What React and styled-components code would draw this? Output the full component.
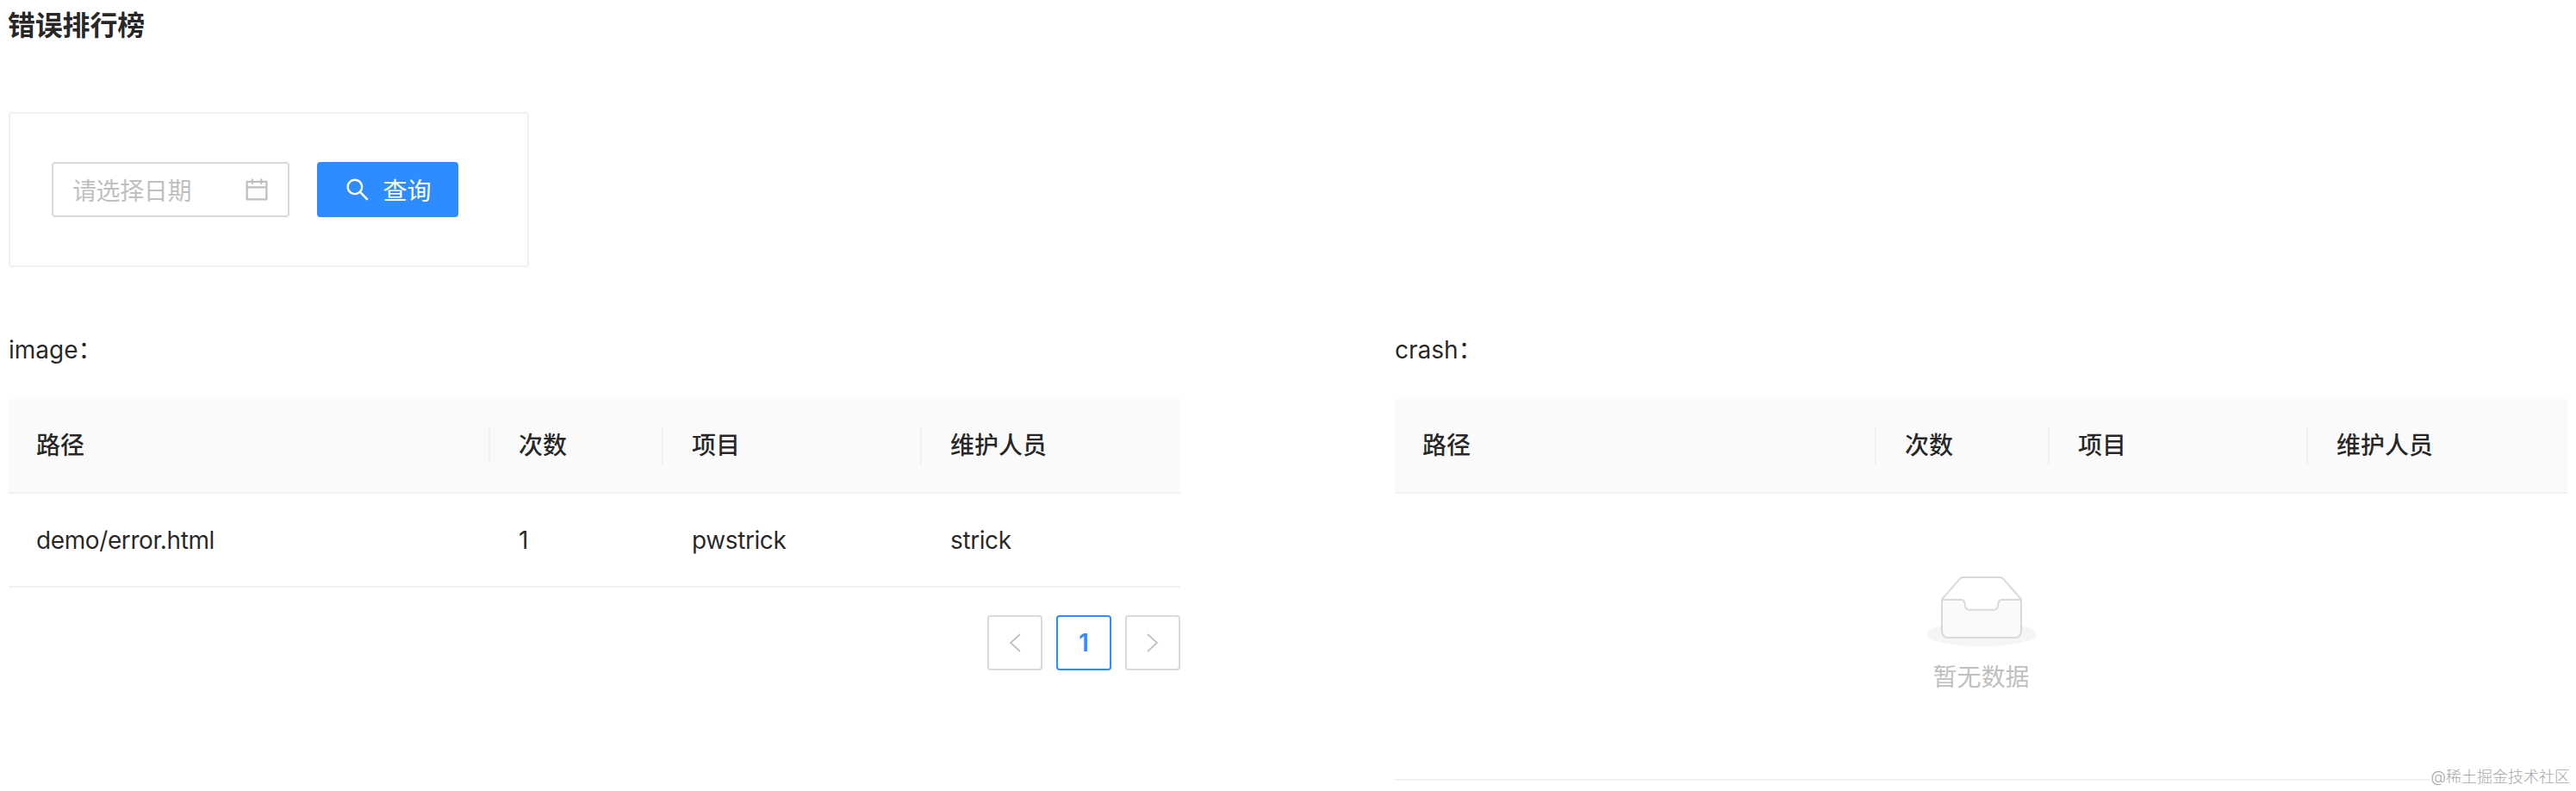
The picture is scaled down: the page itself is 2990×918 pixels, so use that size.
import styled, { createGlobalStyle } from "styled-components";
import { AiOutlineCalendar, AiOutlineSearch } from "react-icons/ai";

const Global = createGlobalStyle`
  html, body {
    margin: 0;
    padding: 0;
    background: #fff;
  }
  * {
    box-sizing: border-box;
  }
`;

const Page = styled.div`
  position: relative;
  width: 2990px;
  height: 918px;
  overflow: hidden;
  padding: 0 10px;
  font-family: Inter, "Noto Sans CJK SC", sans-serif;
  font-size: 28px;
  color: rgba(0, 0, 0, 0.85);
`;

const Title = styled.h3`
  margin: 0 0 0 -1px;
  height: 130px;
  padding-top: 8px;
  font-size: 32px;
  line-height: 44px;
  font-weight: 700;
  letter-spacing: -0.2px;
`;

const SearchCard = styled.div`
  display: flex;
  align-items: center;
  gap: 32px;
  width: 604px;
  height: 180px;
  padding: 0 48px;
  border: 2px solid #f0f0f0;
  border-radius: 4px;
`;

const DateInput = styled.div`
  display: flex;
  align-items: center;
  justify-content: space-between;
  width: 276px;
  height: 64px;
  padding: 0 20px 0 22px;
  border: 2px solid #d9d9d9;
  border-radius: 4px;
  color: #bfbfbf;
  font-size: 28px;
  letter-spacing: -0.4px;
`;

const QueryButton = styled.button`
  display: flex;
  align-items: center;
  justify-content: center;
  gap: 13px;
  width: 164px;
  height: 64px;
  border: none;
  border-radius: 4px;
  background: #2d8cff;
  color: #fff;
  font: inherit;
  box-shadow: 0 4px 0 rgba(0, 0, 0, 0.015);
`;

const Columns = styled.div`
  display: grid;
  grid-template-columns: 1360px 1361px;
  column-gap: 249px;
  margin-top: 73px;
`;

const Section = styled.section`
  min-width: 0;
`;

const Label = styled.div`
  height: 80px;
  line-height: 46px;
`;

const Row = styled.div`
  display: grid;
  grid-template-columns: 560px 201px 300px 1fr;
  align-items: center;
  height: ${(p) => p.$height}px;
  border-bottom: 2px solid #f0f0f0;
  background: ${(p) => (p.$head ? "#fafafa" : "#fff")};
  font-weight: ${(p) => (p.$head ? 500 : 400)};
  letter-spacing: ${(p) => (p.$head ? 0 : "-0.4px")};
`;

const Cell = styled.div`
  position: relative;
  padding-left: 32px;
  line-height: 44px;

  ${(p) =>
    p.$divided &&
    `&::before {
      content: "";
      position: absolute;
      left: -3px;
      top: 0;
      width: 2px;
      height: 44px;
      background: #f0f0f0;
    }`}
`;

const Pager = styled.div`
  display: flex;
  justify-content: flex-end;
  gap: 16px;
  margin-top: 32px;
`;

const PageItem = styled.div`
  display: flex;
  align-items: center;
  justify-content: center;
  width: 64px;
  height: 64px;
  border: 2px solid ${(p) => (p.$active ? "#2d8cff" : "#d9d9d9")};
  border-radius: 4px;
  color: ${(p) => (p.$active ? "#2d8cff" : "#bfbfbf")};
  font-weight: 600;
  font-size: 28px;
`;

const EmptyBody = styled.div`
  display: flex;
  flex-direction: column;
  align-items: center;
  height: 333px;
  padding-top: 95px;
  border-bottom: 2px solid #f0f0f0;
`;

const EmptyText = styled.div`
  margin-top: 14px;
  line-height: 44px;
  color: #bfbfbf;
`;

const Watermark = styled.div`
  position: absolute;
  right: 7px;
  bottom: 6px;
  padding-left: 2px;
  background: #fff;
  font-size: 18px;
  font-weight: 300;
  line-height: 20px;
  color: #a8a8a8;
`;

const EmptyIcon = () => (
  <svg width="128" height="82" viewBox="0 0 64 41">
    <g transform="translate(0 1)" fill="none" fillRule="evenodd">
      <ellipse fill="#F5F5F5" cx="32" cy="33" rx="32" ry="7" />
      <g fillRule="nonzero" stroke="#D9D9D9">
        <path d="M55 12.76L44.854 1.258C44.367.474 43.656 0 42.907 0H21.093c-.749 0-1.46.474-1.947 1.257L9 12.761V22h46v-9.24z" />
        <path
          d="M41.613 15.931c0-1.605.994-2.93 2.227-2.931H55v18.137C55 33.26 53.68 35 52.05 35h-40.1C10.32 35 9 33.259 9 31.137V13h11.16c1.233 0 2.227 1.323 2.227 2.928v.022c0 1.605 1.005 2.901 2.237 2.901h14.752c1.232 0 2.237-1.308 2.237-2.913v-.007z"
          fill="#FAFAFA"
        />
      </g>
    </g>
  </svg>
);

const Chevron = ({ points }) => (
  <svg width="14" height="22" viewBox="0 0 14 22" fill="none" stroke="currentColor" strokeWidth="1.7">
    <polyline points={points} />
  </svg>
);

const headers = ["路径", "次数", "项目", "维护人员"];

const TableHead = () => (
  <Row $head $height={110}>
    {headers.map((h, i) => (
      <Cell key={h} $divided={i > 0}>
        {h}
      </Cell>
    ))}
  </Row>
);

export default function App() {
  return (
    <Page>
      <Global />
      <Title>错误排行榜</Title>
      <SearchCard>
        <DateInput>
          请选择日期
          <AiOutlineCalendar size={32} />
        </DateInput>
        <QueryButton>
          <AiOutlineSearch size={32} />
          查询
        </QueryButton>
      </SearchCard>
      <Columns>
        <Section>
          <Label>image：</Label>
          <TableHead />
          <Row $height={109}>
            <Cell>demo/error.html</Cell>
            <Cell>1</Cell>
            <Cell>pwstrick</Cell>
            <Cell>strick</Cell>
          </Row>
          <Pager>
            <PageItem>
              <Chevron points="13,1 2,11 13,21" />
            </PageItem>
            <PageItem $active>1</PageItem>
            <PageItem>
              <Chevron points="1,1 12,11 1,21" />
            </PageItem>
          </Pager>
        </Section>
        <Section>
          <Label>crash：</Label>
          <TableHead />
          <EmptyBody>
            <EmptyIcon />
            <EmptyText>暂无数据</EmptyText>
          </EmptyBody>
        </Section>
      </Columns>
      <Watermark>@稀土掘金技术社区</Watermark>
    </Page>
  );
}
